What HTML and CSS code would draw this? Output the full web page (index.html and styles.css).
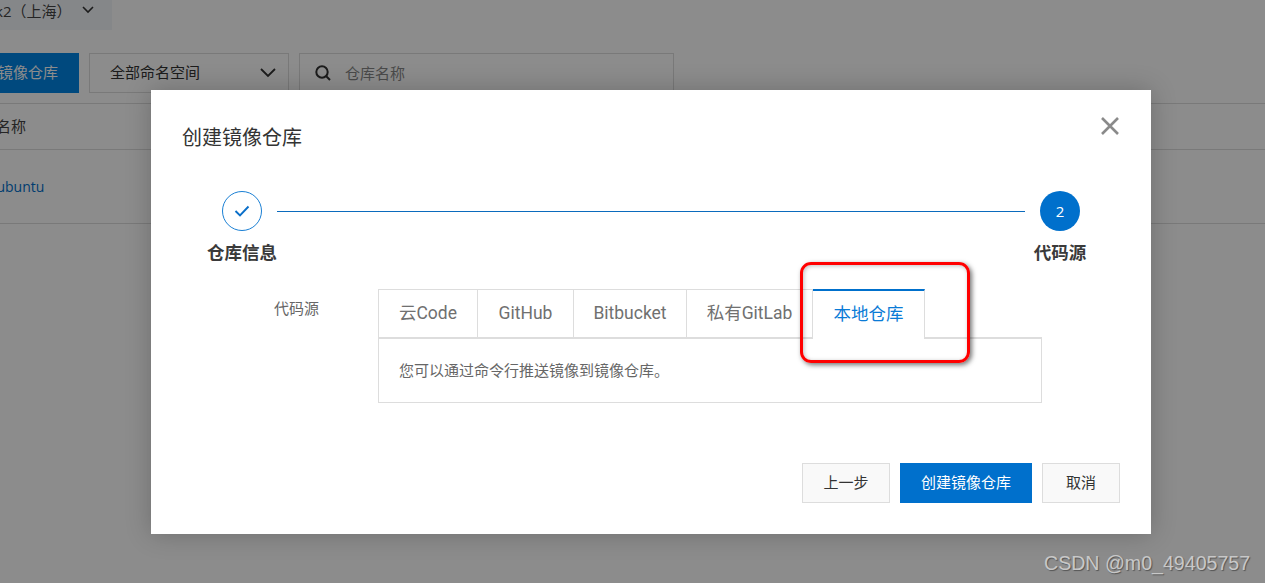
FILE: index.html
```html
<!DOCTYPE html>
<html lang="zh-CN">
<head>
<meta charset="utf-8">
<title>创建镜像仓库</title>
<link rel="stylesheet" href="styles.css">
</head>
<body>
<main class="page">
  <div class="region"><span class="region-text">k2（上海）</span>
    <svg class="region-caret" width="12" height="8" viewBox="0 0 12 8"><path d="M1 1l5 5 5-5" fill="none" stroke="#333" stroke-width="1.6"/></svg>
  </div>
  <div class="toolbar">
    <button class="create-btn">创建镜像仓库</button>
    <div class="select"><span>全部命名空间</span>
      <svg width="16" height="10" viewBox="0 0 16 10"><path d="M1 1l7 7 7-7" fill="none" stroke="#333" stroke-width="1.8"/></svg>
    </div>
    <div class="search">
      <svg width="18" height="18" viewBox="0 0 18 18"><circle cx="8" cy="8" r="5.7" fill="none" stroke="#333" stroke-width="2"/><path d="M12 12l4 4" stroke="#333" stroke-width="2"/></svg>
      <span>仓库名称</span>
    </div>
  </div>
  <div class="th"><span>仓库名称</span></div>
  <div class="tr"><a class="repo">m-ubuntu</a></div>
</main>

<div class="overlay">
  <section class="modal">
    <header class="modal-head">
      <h1 class="modal-title">创建镜像仓库</h1>
      <svg class="close" width="20" height="20" viewBox="0 0 20 20"><path d="M2 2l16 16M18 2L2 18" stroke="#8a8a8a" stroke-width="2.6" fill="none"/></svg>
    </header>

    <div class="steps">
      <div class="step">
        <div class="dot dot-done">
          <svg width="16" height="12" viewBox="0 0 16 12"><path d="M1.5 6l4.5 4.5L14.5 1.5" fill="none" stroke="#0a6fc9" stroke-width="1.9"/></svg>
        </div>
        <div class="step-label">仓库信息</div>
      </div>
      <div class="step-line"></div>
      <div class="step">
        <div class="dot dot-active">2</div>
        <div class="step-label">代码源</div>
      </div>
    </div>

    <div class="form-row">
      <div class="form-label">代码源</div>
      <div class="form-body">
        <div class="tabs">
          <div class="tab tab-a">云Code</div>
          <div class="tab tab-b">GitHub</div>
          <div class="tab tab-c">Bitbucket</div>
          <div class="tab tab-d">私有GitLab</div>
          <div class="tab tab-active">本地仓库</div>
        </div>
        <div class="panel">您可以通过命令行推送镜像到镜像仓库。</div>
      </div>
    </div>

    <footer class="modal-foot">
      <button class="btn btn-prev">上一步</button>
      <button class="btn btn-primary">创建镜像仓库</button>
      <button class="btn btn-cancel">取消</button>
    </footer>
  </section>
</div>

<div class="annotation"></div>
<div class="watermark">CSDN @m0_49405757</div>
</body>
</html>
```

FILE: styles.css
```css
* { box-sizing: border-box; }
html, body { margin: 0; height: 100%; }
body {
  width: 1265px;
  height: 583px;
  overflow: hidden;
  background: #fff;
  font-family: "Open Sans", "Noto Sans CJK SC", sans-serif;
  color: #333;
}
button { font-family: inherit; }

.page { height: 583px; overflow: hidden; }

.region {
  width: 112px;
  height: 30px;
  background: #f3f6fa;
  display: flex;
  align-items: center;
  padding-bottom: 10px;
  font-size: 15px;
  color: #444;
  overflow: hidden;
  margin-bottom: 23px;
}
.region-text { margin-left: -5px; white-space: nowrap; }
.region-caret { margin-left: 11px; margin-top: 0; }

.toolbar { display: flex; height: 40px; gap: 10px; margin-left: -53px; }
.create-btn {
  width: 132px;
  border: 0;
  background: #0085e6;
  color: #fff;
  font-size: 15px;
  padding: 0 0 4px;
  white-space: nowrap;
}
.select {
  width: 200px;
  border: 1px solid #ddd;
  display: flex;
  align-items: center;
  justify-content: space-between;
  padding: 0 12px 0 20px;
  font-size: 15px;
  color: #333;
}
.select span { padding-bottom: 4px; }
.search {
  width: 375px;
  border: 1px solid #ddd;
  display: flex;
  align-items: center;
  gap: 13px;
  padding-left: 14px;
  font-size: 15px;
  color: #888;
}
.search span { padding-bottom: 2px; }

.th {
  margin-top: 10px;
  height: 47px;
  border-top: 1px solid #ddd;
  border-bottom: 1px solid #ddd;
  display: flex;
  align-items: center;
  font-size: 15px;
  color: #444;
  margin-left: -34px;
  padding-bottom: 2px;
}
.tr {
  height: 74px;
  border-bottom: 1px solid #ddd;
  display: flex;
  align-items: center;
  margin-left: -30px;
}
.repo { font-size: 14px; color: #0070cc; margin-left: 9px; }
.th, .tr { width: 1299px; }

.overlay {
  position: absolute;
  inset: 0;
  background: rgba(0, 0, 0, .45);
  padding: 90px 0 0 151px;
}

.modal {
  width: 1000px;
  height: 444px;
  background: #fff;
  box-shadow: 0 0 24px rgba(0, 0, 0, .22);
  padding: 0 31px;
  display: flex;
  flex-direction: column;
}

.modal-head {
  height: 101px;
  display: flex;
  justify-content: space-between;
  align-items: flex-start;
  padding-top: 33px;
}
.modal-title {
  margin: 0;
  font-size: 20px;
  font-weight: 400;
  line-height: 30px;
  color: #333;
}
.close { margin-top: -7px; margin-right: 0; }

.steps { display: flex; margin: 0 25px; height: 98px; }
.step {
  width: 70px;
  display: flex;
  flex-direction: column;
  align-items: center;
  flex: none;
}
.dot {
  width: 40px;
  height: 40px;
  border-radius: 50%;
  display: flex;
  align-items: center;
  justify-content: center;
}
.dot-done { border: 1px solid #1a7fd4; }
.dot-active { background: #0070cc; color: #fff; font-size: 15px; }
.step-label {
  margin-top: 8px;
  font-size: 17.5px;
  line-height: 26px;
  font-weight: 700;
  color: #3a3a3a;
  white-space: nowrap;
}
.step-line {
  flex: 1;
  height: 1px;
  margin-top: 20px;
  background: #0b6bbd;
}

.form-row { display: flex; padding-left: 92px; height: 114px; }
.form-label {
  width: 104px;
  font-size: 15px;
  line-height: 38px;
  color: #666;
}
.form-body { width: 664px; }

.tabs { display: flex; height: 48px; }
.tab {
  border: 1px solid #ddd;
  border-left: 0;
  border-bottom: 0;
  padding-bottom: 1px;
  font-family: "Roboto", "Noto Sans CJK SC", sans-serif;
  font-size: 17.5px;
  line-height: 24px;
  color: #707070;
  display: flex;
  align-items: center;
  justify-content: center;
  white-space: nowrap;
}
.tab-a { width: 100px; border-left: 1px solid #ddd; }
.tab-b { width: 96px; }
.tab-c { width: 113px; }
.tab-d { width: 126px; }
.tab-active {
  width: 112px;
  color: #0a7bd6;
  border-top: 2px solid #0070cc;
  background: #fff;
  margin-bottom: -2px;
  padding-bottom: 3px;
  position: relative;
}
.panel {
  height: 66px;
  border: 1px solid #ddd;
  border-top-width: 2px;
  padding: 0 0 3px 20px;
  display: flex;
  align-items: center;
  font-size: 15px;
  color: #666;
}

.modal-foot {
  padding-top: 60px;
  display: flex;
  justify-content: flex-end;
  gap: 10px;
}
.btn {
  height: 40px;
  font-size: 15px;
  padding: 0 0 4px;
  border: 1px solid #ddd;
  background: #f9f9f9;
  color: #333;
}
.btn-prev { width: 88px; }
.btn-primary { width: 132px; background: #0070cc; border-color: #0070cc; color: #fff; }
.btn-cancel { width: 78px; }

.annotation {
  position: absolute;
  left: 800px;
  top: 262px;
  width: 170px;
  height: 101px;
  border: 3px solid #f00;
  border-radius: 11px;
  box-shadow: 2px 2px 5px rgba(0, 0, 0, .55), inset 1px 1px 4px rgba(0, 0, 0, .25);
}

.watermark {
  position: absolute;
  left: 1044px;
  top: 552px;
  font-family: "Liberation Sans", sans-serif;
  font-size: 19.6px;
  line-height: 22px;
  color: #c8c8c8;
  text-shadow: 1px 1px 1px rgba(0, 0, 0, .4);
  white-space: nowrap;
}
```
